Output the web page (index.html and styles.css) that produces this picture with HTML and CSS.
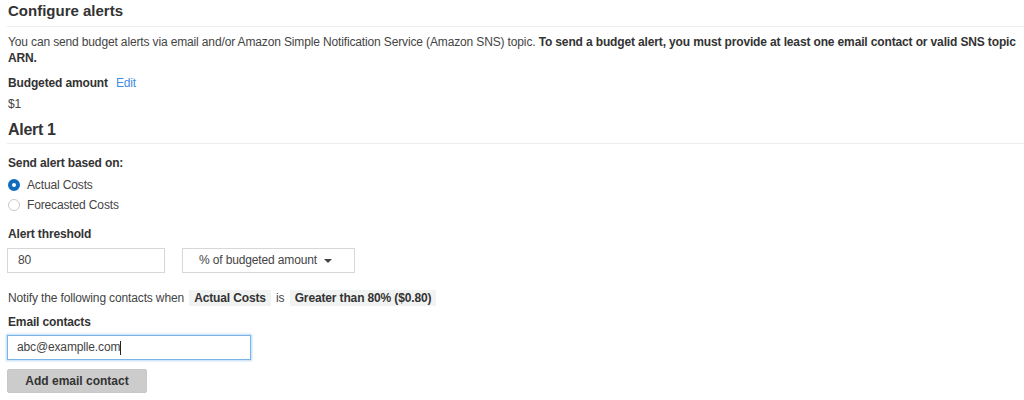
FILE: index.html
```html
<!DOCTYPE html>
<html>
<head>
<meta charset="utf-8">
<link rel="stylesheet" href="styles.css">
</head>
<body>
<div class="page">
  <h2 class="section-title">Configure alerts</h2>
  <p class="intro">You can send budget alerts via email and/or Amazon Simple Notification Service (Amazon SNS) topic. <strong>To send a budget alert, you must provide at least one email contact or valid SNS topic ARN.</strong></p>
  <div class="budget-row"><span class="label">Budgeted amount</span><a class="link">Edit</a></div>
  <div class="budget-value">$1</div>
  <h2 class="section-title alert-title">Alert 1</h2>
  <div class="label field-label first">Send alert based on:</div>
  <div class="radio-row"><span class="radio checked"></span><span>Actual Costs</span></div>
  <div class="radio-row"><span class="radio"></span><span>Forecasted Costs</span></div>
  <div class="label field-label">Alert threshold</div>
  <div class="threshold-row">
    <div class="input threshold">80</div>
    <div class="select">% of budgeted amount <span class="caret"></span></div>
  </div>
  <div class="notify">Notify the following contacts when <span class="badge">Actual Costs</span> is <span class="badge">Greater than 80% ($0.80)</span></div>
  <div class="label field-label email-label">Email contacts</div>
  <div class="input email">abc@examplle.com<span class="cursor"></span></div>
  <button class="btn">Add email contact</button>
</div>
</body>
</html>
```
FILE: styles.css
```css
* { box-sizing: border-box; }
body {
  margin: 0;
  background: #fff;
  font-family: "Liberation Sans", Arial, sans-serif;
  font-size: 12px;
  letter-spacing: -0.14px;
  color: #444;
}
.page {
  padding-left: 7px;
}
.section-title {
  margin: 0;
  padding: 1px 0 5px 1px;
  font-size: 15px;
  line-height: 20px;
  letter-spacing: 0;
  font-weight: bold;
  color: #333;
  border-bottom: 1px solid #eaeded;
}
.alert-title {
  margin-top: 7px;
  padding-bottom: 3px;
  font-size: 16px;
  letter-spacing: -0.3px;
}
.intro {
  margin: 7px 0 0 1px;
  line-height: 16px;
}
.intro strong { color: #333; }
.budget-row {
  margin: 9px 0 0 1px;
  line-height: 16px;
  display: flex;
  gap: 8px;
}
.label {
  font-weight: bold;
  color: #333;
}
.link {
  color: #3f8be0;
  cursor: pointer;
}
.budget-value {
  margin: 5px 0 0 1px;
  line-height: 16px;
}
.field-label {
  margin: 11px 0 0 1px;
  line-height: 16px;
}
.radio-row {
  margin-left: 1px;
  height: 20px;
  display: flex;
  align-items: center;
  gap: 7px;
}
.field-label.first + .radio-row { margin-top: 4px; }
.radio {
  width: 12px;
  height: 12px;
  border-radius: 50%;
  border: 1px solid #c8cccc;
  background: #fff;
}
.radio.checked {
  border: 4px solid #0f6bbd;
}
.threshold-row {
  margin-top: 6px;
  display: flex;
  gap: 17px;
}
.input {
  height: 25px;
  border: 1px solid #d5d8d8;
  line-height: 23px;
  padding-left: 10px;
  color: #444;
  background: #fff;
}
.threshold { width: 158px; }
.select {
  width: 173px;
  height: 25px;
  border: 1px solid #d5d8d8;
  line-height: 23px;
  padding-left: 16px;
  display: flex;
  align-items: center;
  gap: 7px;
}
.caret {
  width: 0;
  height: 0;
  border-left: 4px solid transparent;
  border-right: 4px solid transparent;
  border-top: 4px solid #444;
}
.notify {
  margin: 17px 0 0 1px;
  line-height: 16px;
}
.badge {
  display: inline-block;
  background: #f1f2f2;
  font-weight: bold;
  color: #333;
  padding: 0 5px;
  margin: 0 2px;
}
.email-label { margin-top: 8px; }
.email {
  margin-top: 5px;
  width: 244px;
  border: 1px solid #7ab3e8;
  box-shadow: 0 0 2px 1px rgba(110, 170, 230, 0.45);
  padding-left: 9px;
  display: flex;
  align-items: center;
}
.cursor {
  display: inline-block;
  width: 1px;
  height: 14px;
  background: #222;
}
.btn {
  display: block;
  margin-top: 9px;
  width: 140px;
  height: 24px;
  border: 1px solid #c8c8c8;
  border-radius: 2px;
  background: #cccccc;
  color: #333;
  font-family: "Liberation Sans", Arial, sans-serif;
  font-size: 12px;
  font-weight: bold;
  padding: 0;
}
```
